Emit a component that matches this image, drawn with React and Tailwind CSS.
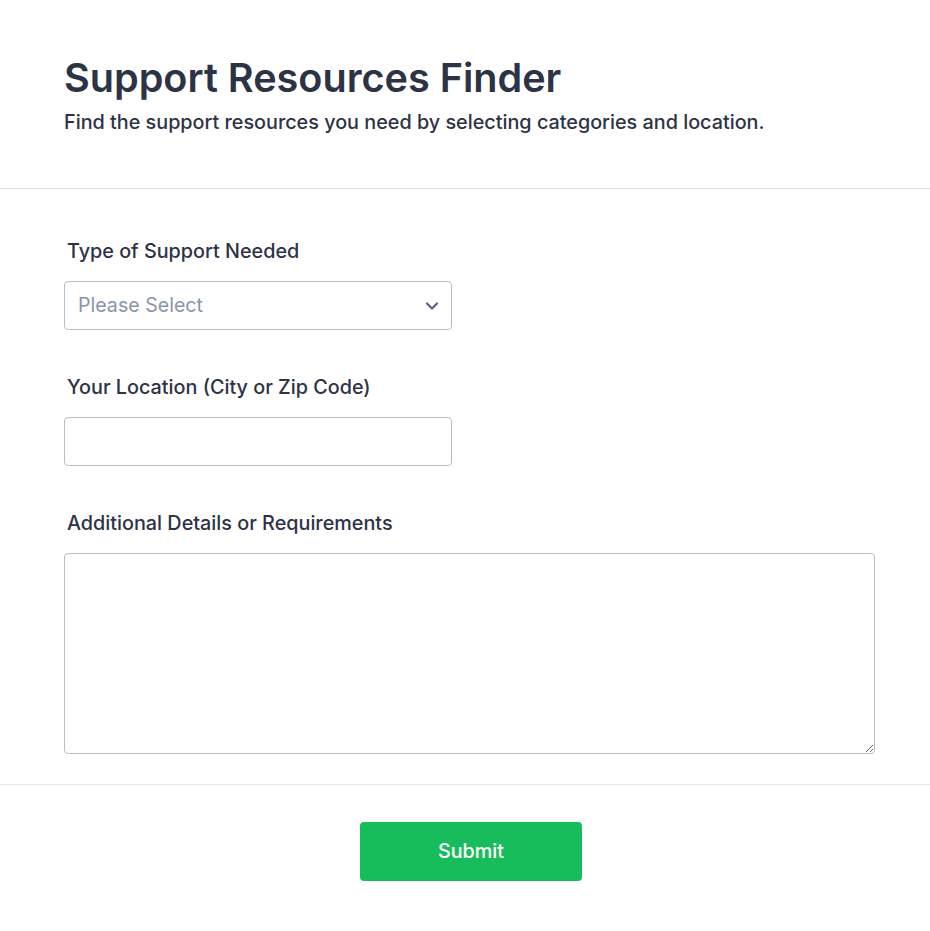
import React from "react";

export default function App() {
  return (
    <div
      className="min-h-[931px] w-full bg-white text-[#2c3345]"
      style={{ fontFamily: "Inter, 'Noto Sans', sans-serif" }}
    >
      <header className="border-b border-[#d8dde9] pl-16 pr-14 pt-[56px] pb-[52px]">
        <h1 className="text-[39.6px] font-semibold leading-[44px]">
          Support Resources Finder
        </h1>
        <p className="mt-2 text-[19.8px] font-medium leading-[28px]">
          Find the support resources you need by selecting categories and location.
        </p>
      </header>

      <form className="pl-16 pr-[55px]">
        <div className="pt-12">
          <label className="block pl-[3px] text-[19.8px] font-medium leading-[28px]">
            Type of Support Needed
          </label>
          <div className="relative mt-4 w-[388px]">
            <select
              defaultValue=""
              className="h-[49px] w-full appearance-none rounded border border-[#b8bdc9] bg-white pl-[13px] pr-10 text-[19.6px] text-[#8894ab] outline-none"
            >
              <option value="" disabled>
                Please Select
              </option>
              <option>Mental Health</option>
              <option>Housing</option>
              <option>Food Assistance</option>
            </select>
            <svg
              className="pointer-events-none absolute right-[13px] top-1/2 -translate-y-1/2"
              width="14"
              height="14"
              viewBox="0 0 14 14"
              fill="none"
            >
              <path
                d="M2 4.5L7 9.5L12 4.5"
                stroke="#57647e"
                strokeWidth="2.2"
                strokeLinecap="round"
                strokeLinejoin="round"
              />
            </svg>
          </div>
        </div>

        <div className="pt-[43px]">
          <label className="block pl-[3px] text-[19.8px] font-medium leading-[28px]">
            Your Location (City or Zip Code)
          </label>
          <input
            type="text"
            className="mt-4 block h-[49px] w-[388px] rounded border border-[#b8bdc9] bg-white px-3 text-[18px] outline-none"
          />
        </div>

        <div className="pt-[43px]">
          <label className="block pl-[3px] text-[19.8px] font-medium leading-[28px]">
            Additional Details or Requirements
          </label>
          <textarea className="mt-4 block h-[201px] w-[811px] rounded border border-[#b8bdc9] bg-white p-3 text-[18px] outline-none" />
        </div>
      </form>

      <div className="mt-[30px] flex justify-center border-t border-[#e3e6ee] pl-3 pt-[37px]">
        <button
          type="button"
          className="h-[59px] w-[222px] rounded bg-[#18bd5b] text-[19.8px] font-medium text-white"
        >
          Submit
        </button>
      </div>
    </div>
  );
}
